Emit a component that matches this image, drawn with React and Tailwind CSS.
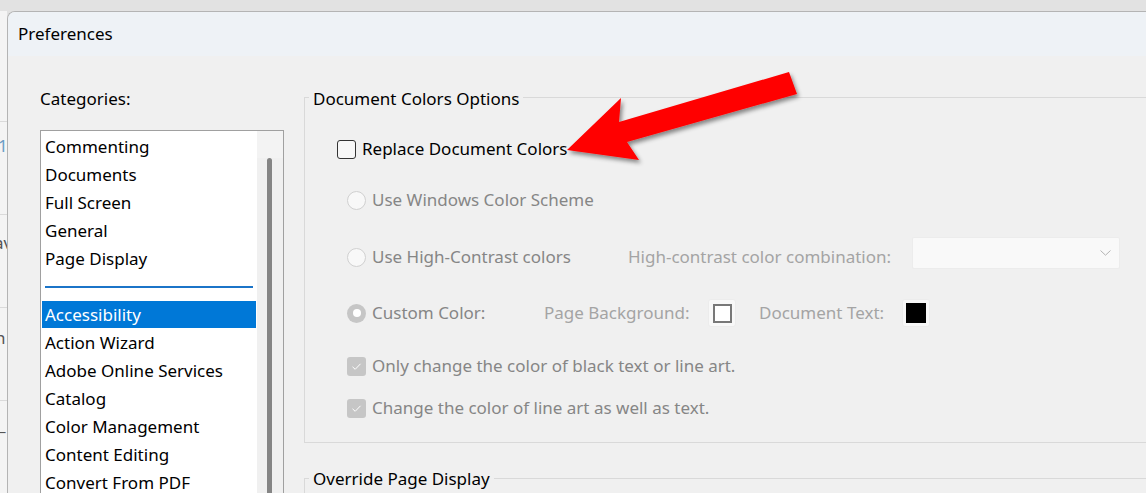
import React from "react";

const categoriesTop = ["Commenting", "Documents", "Full Screen", "General", "Page Display"];
const categoriesBottom = [
  "Action Wizard",
  "Adobe Online Services",
  "Catalog",
  "Color Management",
  "Content Editing",
  "Convert From PDF",
  "Create PDF",
];

function Radio({ filled }) {
  if (filled) {
    return (
      <div className="w-[19px] h-[19px] rounded-full bg-[#c6c6c6] flex items-center justify-center shrink-0">
        <div className="w-[8px] h-[8px] rounded-full bg-white" />
      </div>
    );
  }
  return <div className="w-[19px] h-[19px] rounded-full border border-[#d0d0d0] bg-[#f8f8f8] shrink-0" />;
}

function DisabledCheck() {
  return (
    <div className="w-[19px] h-[19px] rounded-[3px] bg-[#c6c6c6] flex items-center justify-center shrink-0">
      <svg width="11" height="9" viewBox="0 0 11 9">
        <path d="M1.5 4.8 L4.2 7.3 L9.5 1.8" fill="none" stroke="#ffffff" strokeWidth="1" />
      </svg>
    </div>
  );
}

export default function App() {
  return (
    <div className="relative w-[1146px] h-[493px] overflow-hidden bg-[#e2e2e2] flex font-['Noto_Sans',sans-serif] text-[17px] text-black">
      {/* window behind the dialog */}
      <div className="w-[7px] shrink-0 flex flex-col pt-[30px] mt-[11px] bg-[#f4f4f4] overflow-hidden">
        <div className="h-[82px] border-b border-[#dadada]" />
        <div className="h-[93px] border-b border-[#dadada] flex items-start pt-[12px]">
          <span className="ml-[-2px] text-[#6a9cc4] leading-[24px]">1</span>
        </div>
        <div className="h-[94px] border-b border-[#dadada] flex items-start pt-[16px]">
          <span className="ml-[-6px] text-[#555] leading-[24px]">av</span>
        </div>
        <div className="h-[93px] border-b border-[#dadada] flex items-start pt-[18px]">
          <span className="ml-[-5px] text-[#555] leading-[24px]">n</span>
        </div>
        <div className="h-[93px] flex items-start pt-[12px]">
          <span className="ml-[-2px] text-[#555] leading-[24px]">_</span>
        </div>
      </div>

      {/* dialog */}
      <div className="mt-[11px] flex-1 min-w-0 rounded-tl-[8px] border-l border-t border-[#b4b4b4] bg-[#f0f0f0] overflow-hidden flex flex-col">
        <div className="h-[44px] shrink-0 bg-[#eef2f6] flex items-center pl-[10px]">Preferences</div>

        <div className="flex pl-[32px] gap-[20px]">
          {/* left column */}
          <div className="w-[244px] shrink-0 flex flex-col">
            <div className="mt-[31px] h-[24px] leading-[24px]">Categories:</div>
            <div className="mt-[19px] h-[400px] border border-[#a0a0a0] bg-white flex">
              <div className="flex-1 flex flex-col px-[1px] pt-[2px]">
                {categoriesTop.map((c) => (
                  <div key={c} className="h-[28px] leading-[28px] px-[3px] whitespace-nowrap">
                    {c}
                  </div>
                ))}
                <div className="h-[28px] flex items-center px-[3px]">
                  <div className="w-full h-[1.5px] bg-[#1b74c8]" />
                </div>
                <div className="h-[27px] mb-[1px] leading-[27px] px-[3px] bg-[#0078d7] text-white whitespace-nowrap">
                  Accessibility
                </div>
                {categoriesBottom.map((c) => (
                  <div key={c} className="h-[28px] leading-[28px] px-[3px] whitespace-nowrap">
                    {c}
                  </div>
                ))}
              </div>
              <div className="w-[26px] bg-[#f0f0f0] flex flex-col">
                <div className="h-[27px] bg-[#f3f3f3]" />
                <div className="ml-[10px] w-[5px] flex-1 rounded-t-full bg-[#858585]" />
              </div>
            </div>
          </div>

          {/* right column */}
          <div className="flex flex-col shrink-0">
            <fieldset className="mt-[29px] w-[900px] border border-[#d9d9d9] pb-[20px]">
              <legend className="ml-[4px] px-[4px] h-[24px] leading-[28px]">Document Colors Options</legend>

              <div className="pl-[32px] flex flex-col">
                <div className="mt-[26px] h-[28px] flex items-center gap-[6px]">
                  <div className="w-[19px] h-[19px] rounded-[3px] border border-[#333333] bg-[#f7f7f7]" />
                  <span>Replace Document Colors</span>
                </div>

                <div className="mt-[23px] h-[28px] flex items-center gap-[6px] ml-[10px] text-[#868686]">
                  <Radio />
                  <span>Use Windows Color Scheme</span>
                </div>

                <div className="mt-[29px] h-[28px] flex items-center ml-[10px] text-[#868686]">
                  <Radio />
                  <span className="ml-[6px] w-[256px] whitespace-nowrap">Use High-Contrast colors</span>
                  <span className="w-[284px] whitespace-nowrap text-[#a4a4a4]">High-contrast color combination:</span>
                  <div className="self-start mt-[-6px] w-[208px] h-[32px] bg-[#f9f9f9] border border-[#ececec] rounded-[2px] flex items-center justify-end pr-[8px]">
                    <svg width="11" height="6" viewBox="0 0 11 6">
                      <path d="M0.5 0.5 L5.5 5.2 L10.5 0.5" fill="none" stroke="#b3b3b3" strokeWidth="1" />
                    </svg>
                  </div>
                </div>

                <div className="mt-[28px] h-[28px] flex items-center ml-[10px] text-[#868686]">
                  <Radio filled />
                  <span className="ml-[6px] w-[172px] whitespace-nowrap">Custom Color:</span>
                  <span className="w-[164px] whitespace-nowrap text-[#a4a4a4]">Page Background:</span>
                  <div className="w-[28px] h-[28px] rounded-[3px] bg-[#f8f8f8] border border-[#ececec] flex items-center justify-center">
                    <div className="w-[19px] h-[19px] bg-white border-[2px] border-[#787878]" />
                  </div>
                  <span className="ml-[23px] w-[143px] whitespace-nowrap text-[#a4a4a4]">Document Text:</span>
                  <div className="w-[28px] h-[28px] rounded-[3px] bg-[#f8f8f8] border border-[#ececec] flex items-center justify-center">
                    <div className="w-[20px] h-[20px] bg-black" />
                  </div>
                </div>

                <div className="mt-[25px] h-[28px] flex items-center gap-[6px] ml-[10px] text-[#868686]">
                  <DisabledCheck />
                  <span>Only change the color of black text or line art.</span>
                </div>

                <div className="mt-[14px] h-[28px] flex items-center gap-[6px] ml-[10px] text-[#868686]">
                  <DisabledCheck />
                  <span>Change the color of line art as well as text.</span>
                </div>
              </div>
            </fieldset>

            <fieldset className="mt-[23px] w-[900px] h-[80px] border border-[#d9d9d9]">
              <legend className="ml-[4px] px-[4px] h-[24px] leading-[26px]">Override Page Display</legend>
            </fieldset>
          </div>
        </div>
      </div>

      {/* red annotation arrow */}
      <svg className="absolute left-0 top-0 pointer-events-none" width="1146" height="493" viewBox="0 0 1146 493">
        <defs>
          <filter id="arrowShadow" x="-10%" y="-30%" width="130%" height="170%">
            <feDropShadow dx="2" dy="3" stdDeviation="2.2" floodColor="#000000" floodOpacity="0.45" />
          </filter>
        </defs>
        <polygon
          points="567,150 621,98 619,122 789,72 797,94 627,142 639,160"
          fill="#ff0000"
          filter="url(#arrowShadow)"
        />
      </svg>
    </div>
  );
}
